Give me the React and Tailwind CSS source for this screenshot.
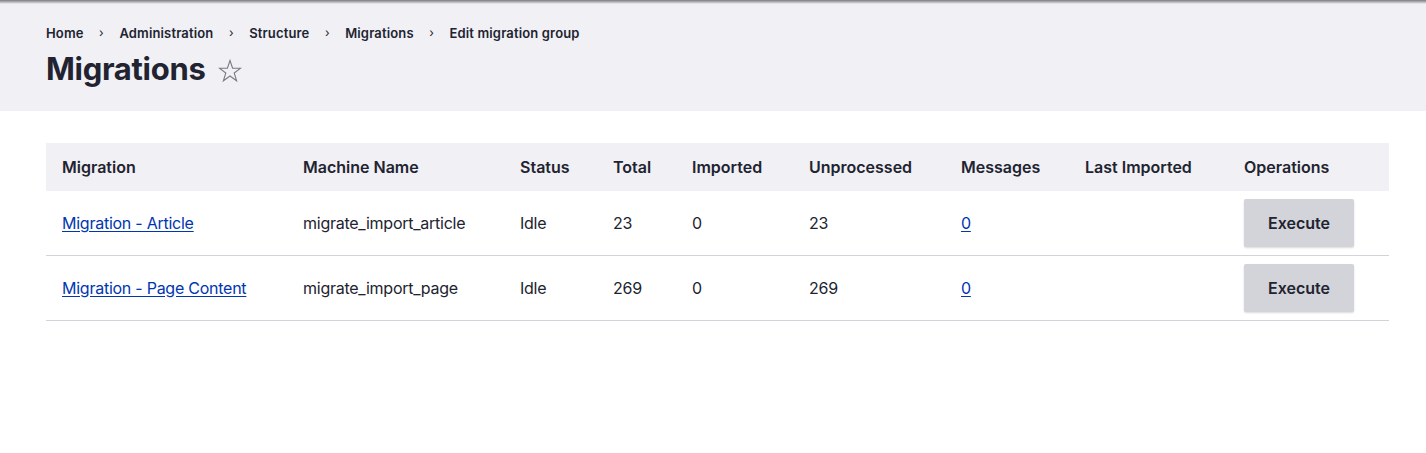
const crumbs = ["Home", "Administration", "Structure", "Migrations", "Edit migration group"];

const columns = [
  { label: "Migration", w: "w-[241px]" },
  { label: "Machine Name", w: "w-[217px]" },
  { label: "Status", w: "w-[93px]" },
  { label: "Total", w: "w-[79px]" },
  { label: "Imported", w: "w-[117px]" },
  { label: "Unprocessed", w: "w-[152px]" },
  { label: "Messages", w: "w-[124px]" },
  { label: "Last Imported", w: "w-[159px]" },
  { label: "Operations", w: "" },
];

const migrations = [
  { name: "Migration - Article", machine: "migrate_import_article", status: "Idle", total: 23, imported: 0, unprocessed: 23, messages: 0 },
  { name: "Migration - Page Content", machine: "migrate_import_page", status: "Idle", total: 269, imported: 0, unprocessed: 269, messages: 0 },
];

function Star() {
  return (
    <svg width="24" height="24" viewBox="0 0 24 24" className="ml-[12px] mt-[3px]">
      <polygon
        points="12,1.5 14.6,9.2 22.6,9.2 16.2,14 18.6,21.8 12,17 5.4,21.8 7.8,14 1.4,9.2 9.4,9.2"
        fill="none"
        stroke="#7a7a80"
        strokeWidth="1.1"
      />
    </svg>
  );
}

export default function App() {
  return (
    <div className="min-h-screen bg-white text-[#222330]" style={{ fontFamily: "Inter, 'Liberation Sans', sans-serif" }}>

      {/* Page header */}
      <header className="bg-[#f0f0f5] h-[111px]">
        <div className="h-[4px] bg-linear-to-b from-[#7c7c80] to-[#f0f0f5]"></div>
        <div className="px-[46px] pt-[21px]">
          <nav className="flex items-center text-[13px] font-semibold leading-4 tracking-[0.15px]">
            {crumbs.map((c, i) => (
              <span key={c} className="flex items-center">
                {i > 0 && <span className="mx-[15.5px] text-[12px] font-normal">›</span>}
                {c}
              </span>
            ))}
          </nav>
          <div className="flex items-center mt-[8px]">
            <h1 className="text-[31px] font-bold leading-10 tracking-[-0.3px]">Migrations</h1>
            <Star />
          </div>
        </div>
      </header>

      {/* Migrations table */}
      <div className="pl-[46px] pr-[37px] pt-[32px]">
        <table className="w-full border-collapse text-[16px]">
          <thead>
            <tr className="bg-[#f0f0f5] h-[48px]">
              {columns.map((col) => (
                <th key={col.label} className={`${col.w} text-left font-semibold px-4 align-middle`}>
                  {col.label}
                </th>
              ))}
            </tr>
          </thead>
          <tbody className="tracking-[-0.25px]">
            {migrations.map((m) => (
              <tr key={m.machine} className="h-[64.5px] border-b border-[#d3d4d9]">
                <td className="px-4">
                  <a href="#" className="text-[#0036b1] underline underline-offset-2">{m.name}</a>
                </td>
                <td className="px-4">{m.machine}</td>
                <td className="px-4">{m.status}</td>
                <td className="px-4">{m.total}</td>
                <td className="px-4">{m.imported}</td>
                <td className="px-4">{m.unprocessed}</td>
                <td className="px-4">
                  <a href="#" className="text-[#0036b1] underline underline-offset-2">{m.messages}</a>
                </td>
                <td className="px-4"></td>
                <td className="px-4">
                  <button className="w-[110px] h-[48px] bg-[#d3d4d9] rounded-[2px] font-semibold text-[16px] tracking-normal shadow-[0_1px_2px_rgba(0,0,0,0.15)]">
                    Execute
                  </button>
                </td>
              </tr>
            ))}
          </tbody>
        </table>
      </div>
    </div>
  );
}
